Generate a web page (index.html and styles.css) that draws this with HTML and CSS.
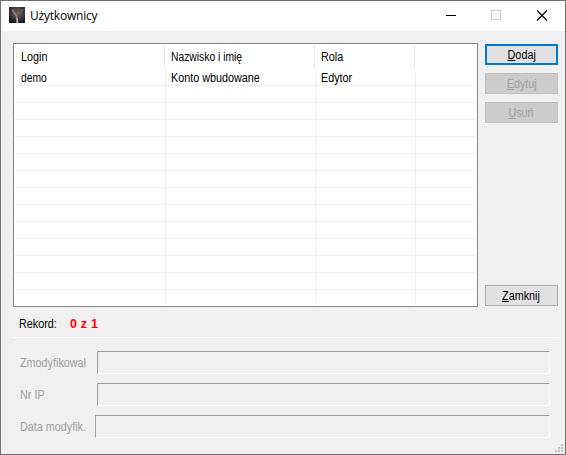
FILE: index.html
```html
<!DOCTYPE html>
<html lang="pl">
<head>
<meta charset="utf-8">
<title>Użytkownicy</title>
<link rel="stylesheet" href="styles.css">
</head>
<body>
<div class="window">
  <header class="titlebar">
    <svg class="app-icon" width="16" height="16" viewBox="0 0 16 16">
      <defs>
        <radialGradient id="sky" cx=".55" cy=".35" r=".7">
          <stop offset="0" stop-color="#6e6261"/><stop offset=".5" stop-color="#463d3f"/><stop offset="1" stop-color="#12131b"/>
        </radialGradient>
      </defs>
      <rect width="16" height="16" fill="url(#sky)"/>
      <path d="M3 2.500L5.500 6L7.500 9L8.500 16" fill="none" stroke="#a3958f" stroke-width="1.800" opacity=".7"/>
      <path d="M7 8L12 5L14 2" fill="none" stroke="#8a7873" stroke-width="1.500" opacity=".4"/>
      <path d="M8 11L8.500 16" stroke="#c8c4c4" stroke-width="1.500" opacity=".8"/>
    </svg>
    <h1 class="title">Użytkownicy</h1>
    <svg class="controls" width="130" height="30" viewBox="0 0 130 30" fill="none" shape-rendering="crispEdges">
      <path d="M11 14.500H21" stroke="#000"/>
      <rect x="56.500" y="9.500" width="9" height="9" stroke="#ccc"/>
      <path d="M102 9.500L112 19.500M112 9.500L102 19.500" stroke="#000" stroke-width="1.100" shape-rendering="auto"/>
    </svg>
  </header>
  <main class="content">
    <div class="top">
      <div class="list">
        <div class="row head"><div><span>Login</span></div><div><span class="narrow">Nazwisko i imię</span></div><div><span>Rola</span></div><div></div></div>
        <div class="row"><div><span class="narrow">demo</span></div><div><span>Konto wbudowane</span></div><div><span>Edytor</span></div><div></div></div>
        <div class="row"><div></div><div></div><div></div><div></div></div>
        <div class="row"><div></div><div></div><div></div><div></div></div>
        <div class="row"><div></div><div></div><div></div><div></div></div>
        <div class="row"><div></div><div></div><div></div><div></div></div>
        <div class="row"><div></div><div></div><div></div><div></div></div>
        <div class="row"><div></div><div></div><div></div><div></div></div>
        <div class="row"><div></div><div></div><div></div><div></div></div>
        <div class="row"><div></div><div></div><div></div><div></div></div>
        <div class="row"><div></div><div></div><div></div><div></div></div>
        <div class="row"><div></div><div></div><div></div><div></div></div>
        <div class="row"><div></div><div></div><div></div><div></div></div>
        <div class="row"><div></div><div></div><div></div><div></div></div>
        <div class="row last"><div></div><div></div><div></div><div></div></div>
      </div>
      <div class="buttons">
        <button class="btn default"><span><u>D</u>odaj</span></button>
        <button class="btn" disabled><span><u>E</u>dytuj</span></button>
        <button class="btn" disabled><span><u>U</u>suń</span></button>
        <button class="btn close"><span><u>Z</u>amknij</span></button>
      </div>
    </div>
    <div class="record"><span class="record-label">Rekord:</span><b>0 z 1</b></div>
    <div class="details">
      <div class="field"><label><span>Zmodyfikował</span></label><div class="box"></div></div>
      <div class="field"><label><span>Nr IP</span></label><div class="box"></div></div>
      <div class="field date"><label><span>Data modyfik.</span></label><div class="box"></div></div>
    </div>
  </main>
  <svg class="grip" width="8" height="8" fill="#bfbfbf" shape-rendering="crispEdges">
    <path d="M6 0h2v2h-2zM3 3h2v2h-2zM6 3h2v2h-2zM0 6h2v2h-2zM3 6h2v2h-2zM6 6h2v2h-2z"/>
  </svg>
</div>
</body>
</html>
```
FILE: styles.css
```css
* { box-sizing: border-box; }
body { margin: 0; font: 12px/14px "Liberation Sans", Arial, sans-serif; color: #000; }
span { display: inline-block; transform: scaleX(.9); transform-origin: left; white-space: nowrap; }
span.narrow { transform: scaleX(.86); }

.window { position: relative; width: 566px; height: 455px; background: #f0f0f0; border: 1px solid #707070; overflow: hidden; }
.titlebar { display: flex; align-items: center; height: 30px; padding-left: 8px; background: #fff; }
.app-icon { margin-top: -2px; }
.title { margin: 0 0 0 5px; font: 12px/16px "Open Sans", "Noto Sans", sans-serif; letter-spacing: -.2px; }
.controls { margin-left: auto; }

.content { padding: 12px 6px 0 12px; }
.top { display: flex; gap: 7px; height: 264px; }
.list { display: flex; flex-direction: column; width: 465px; padding: 1px; background: #fff; border: 1px solid #828790; }
.row { display: grid; grid-template-columns: 151px 150px 100px 1fr; height: 17px; flex: none; border-bottom: 1px solid #f0f0f0; }
.row > div { padding: 2px 0 0 5px; border-right: 1px solid #f0f0f0; }
.row > div:first-child { padding-left: 6px; }
.row > div:last-child { border-right: 0; }
.row.head { grid-template-columns: 150px 150px 100px 1fr; height: 24px; border-bottom: 0; }
.row.head > div { padding: 5px 0 0 6px; border-right-color: #e5e5e5; }
.row.last { height: auto; flex: 1; border-bottom: 0; }

.buttons { display: flex; flex-direction: column; gap: 8px; padding: 1px 0; }
.btn { width: 73px; height: 21px; padding: 0; font: inherit; color: #000; background: #e1e1e1; border: 1px solid #adadad; }
.btn span { transform-origin: center; }
.btn u { text-underline-offset: 1px; text-decoration-thickness: 1px; text-decoration-skip-ink: none; }
.btn.default { border: 2px solid #0078d7; }
.btn:disabled { color: #a0a0a0; background: #ccc; border-color: #bfbfbf; }
.btn.close { margin-top: auto; }

.record { display: flex; height: 31px; padding: 10px 0 0 6px; width: 546px; border-bottom: 1px solid #fff; }
.record-label { width: 51px; }
.record b { color: #f00; font: bold 12.5px/14px "Liberation Sans", Arial, sans-serif; letter-spacing: .2px; }

.details { display: flex; flex-direction: column; gap: 9px; padding: 13px 9px 0 7px; color: #a0a0a0; }
.field { display: grid; grid-template-columns: 77px 453px; height: 23px; align-items: center; }
.field.date { grid-template-columns: 75px 455px; }
.box { height: 23px; border: 1px solid; border-color: #a0a0a0 #fff #fff #a0a0a0; }
.grip { position: absolute; right: 2px; bottom: 2px; }
```
